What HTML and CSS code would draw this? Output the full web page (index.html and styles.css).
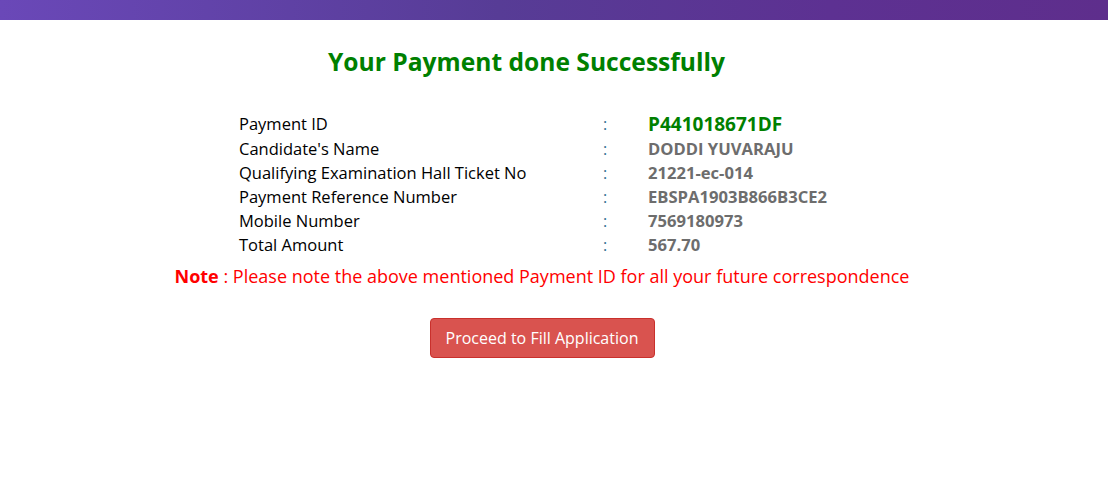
FILE: index.html
```html
<!DOCTYPE html>
<html>
<head>
<meta charset="utf-8">
<link rel="stylesheet" href="styles.css">
</head>
<body>
<div class="topbar"></div>
<main class="content">
  <h2 class="title">Your Payment done Successfully</h2>
  <div class="details">
    <div class="row first"><span class="label">Payment ID</span><span class="colon">:</span><span class="value id">P441018671DF</span></div>
    <div class="row"><span class="label">Candidate's Name</span><span class="colon">:</span><span class="value">DODDI YUVARAJU</span></div>
    <div class="row"><span class="label">Qualifying Examination Hall Ticket No</span><span class="colon">:</span><span class="value">21221-ec-014</span></div>
    <div class="row"><span class="label">Payment Reference Number</span><span class="colon">:</span><span class="value">EBSPA1903B866B3CE2</span></div>
    <div class="row"><span class="label">Mobile Number</span><span class="colon">:</span><span class="value">7569180973</span></div>
    <div class="row"><span class="label">Total Amount</span><span class="colon">:</span><span class="value">567.70</span></div>
  </div>
  <p class="note"><b>Note</b> : Please note the above mentioned Payment ID for all your future correspondence</p>
  <div class="actions"><button class="btn">Proceed to Fill Application</button></div>
</main>
</body>
</html>
```
FILE: styles.css
```css
html, body { margin: 0; padding: 0; background: #fff; }
body { font-family: "Open Sans", "Noto Sans", sans-serif; color: #000; }
.topbar {
  height: 20px;
  background: linear-gradient(to right, #6a48b8 0%, #573c96 45%, #5d3192 75%, #5e2e8c 100%);
}
.content { display: flex; flex-direction: column; }
.title {
  margin: 26px 55px 0 0;
  text-align: center;
  color: #008000;
  font-size: 24.6px;
  font-weight: 700;
  line-height: 32px;
}
.details { margin: 33px 0 0 239px; display: flex; flex-direction: column; }
.row { display: grid; grid-template-columns: 364px 45px auto; height: 24px; align-items: center; font-size: 16.5px; line-height: 22px; }
.row.first { height: 26px; }
.label { color: #000; }
.colon { color: #31708f; font-size: 16px; }
.value { font-weight: 700; color: #6d6d6d; font-size: 16.6px; }
.value.id { color: #008000; font-size: 19px; }
.note {
  margin: 7px 24px 0 0;
  text-align: center;
  color: #ff0000;
  font-size: 18px;
  line-height: 24px;
}
.note b { font-weight: 700; }
.actions { display: flex; justify-content: center; margin: 30px 24px 0 0; }
.btn {
  width: 225px;
  height: 40px;
  background: #d9534f;
  border: 1px solid #c9302c;
  border-radius: 4px;
  color: #fff;
  font-family: inherit;
  font-size: 16px;
  padding: 0;
}
```
